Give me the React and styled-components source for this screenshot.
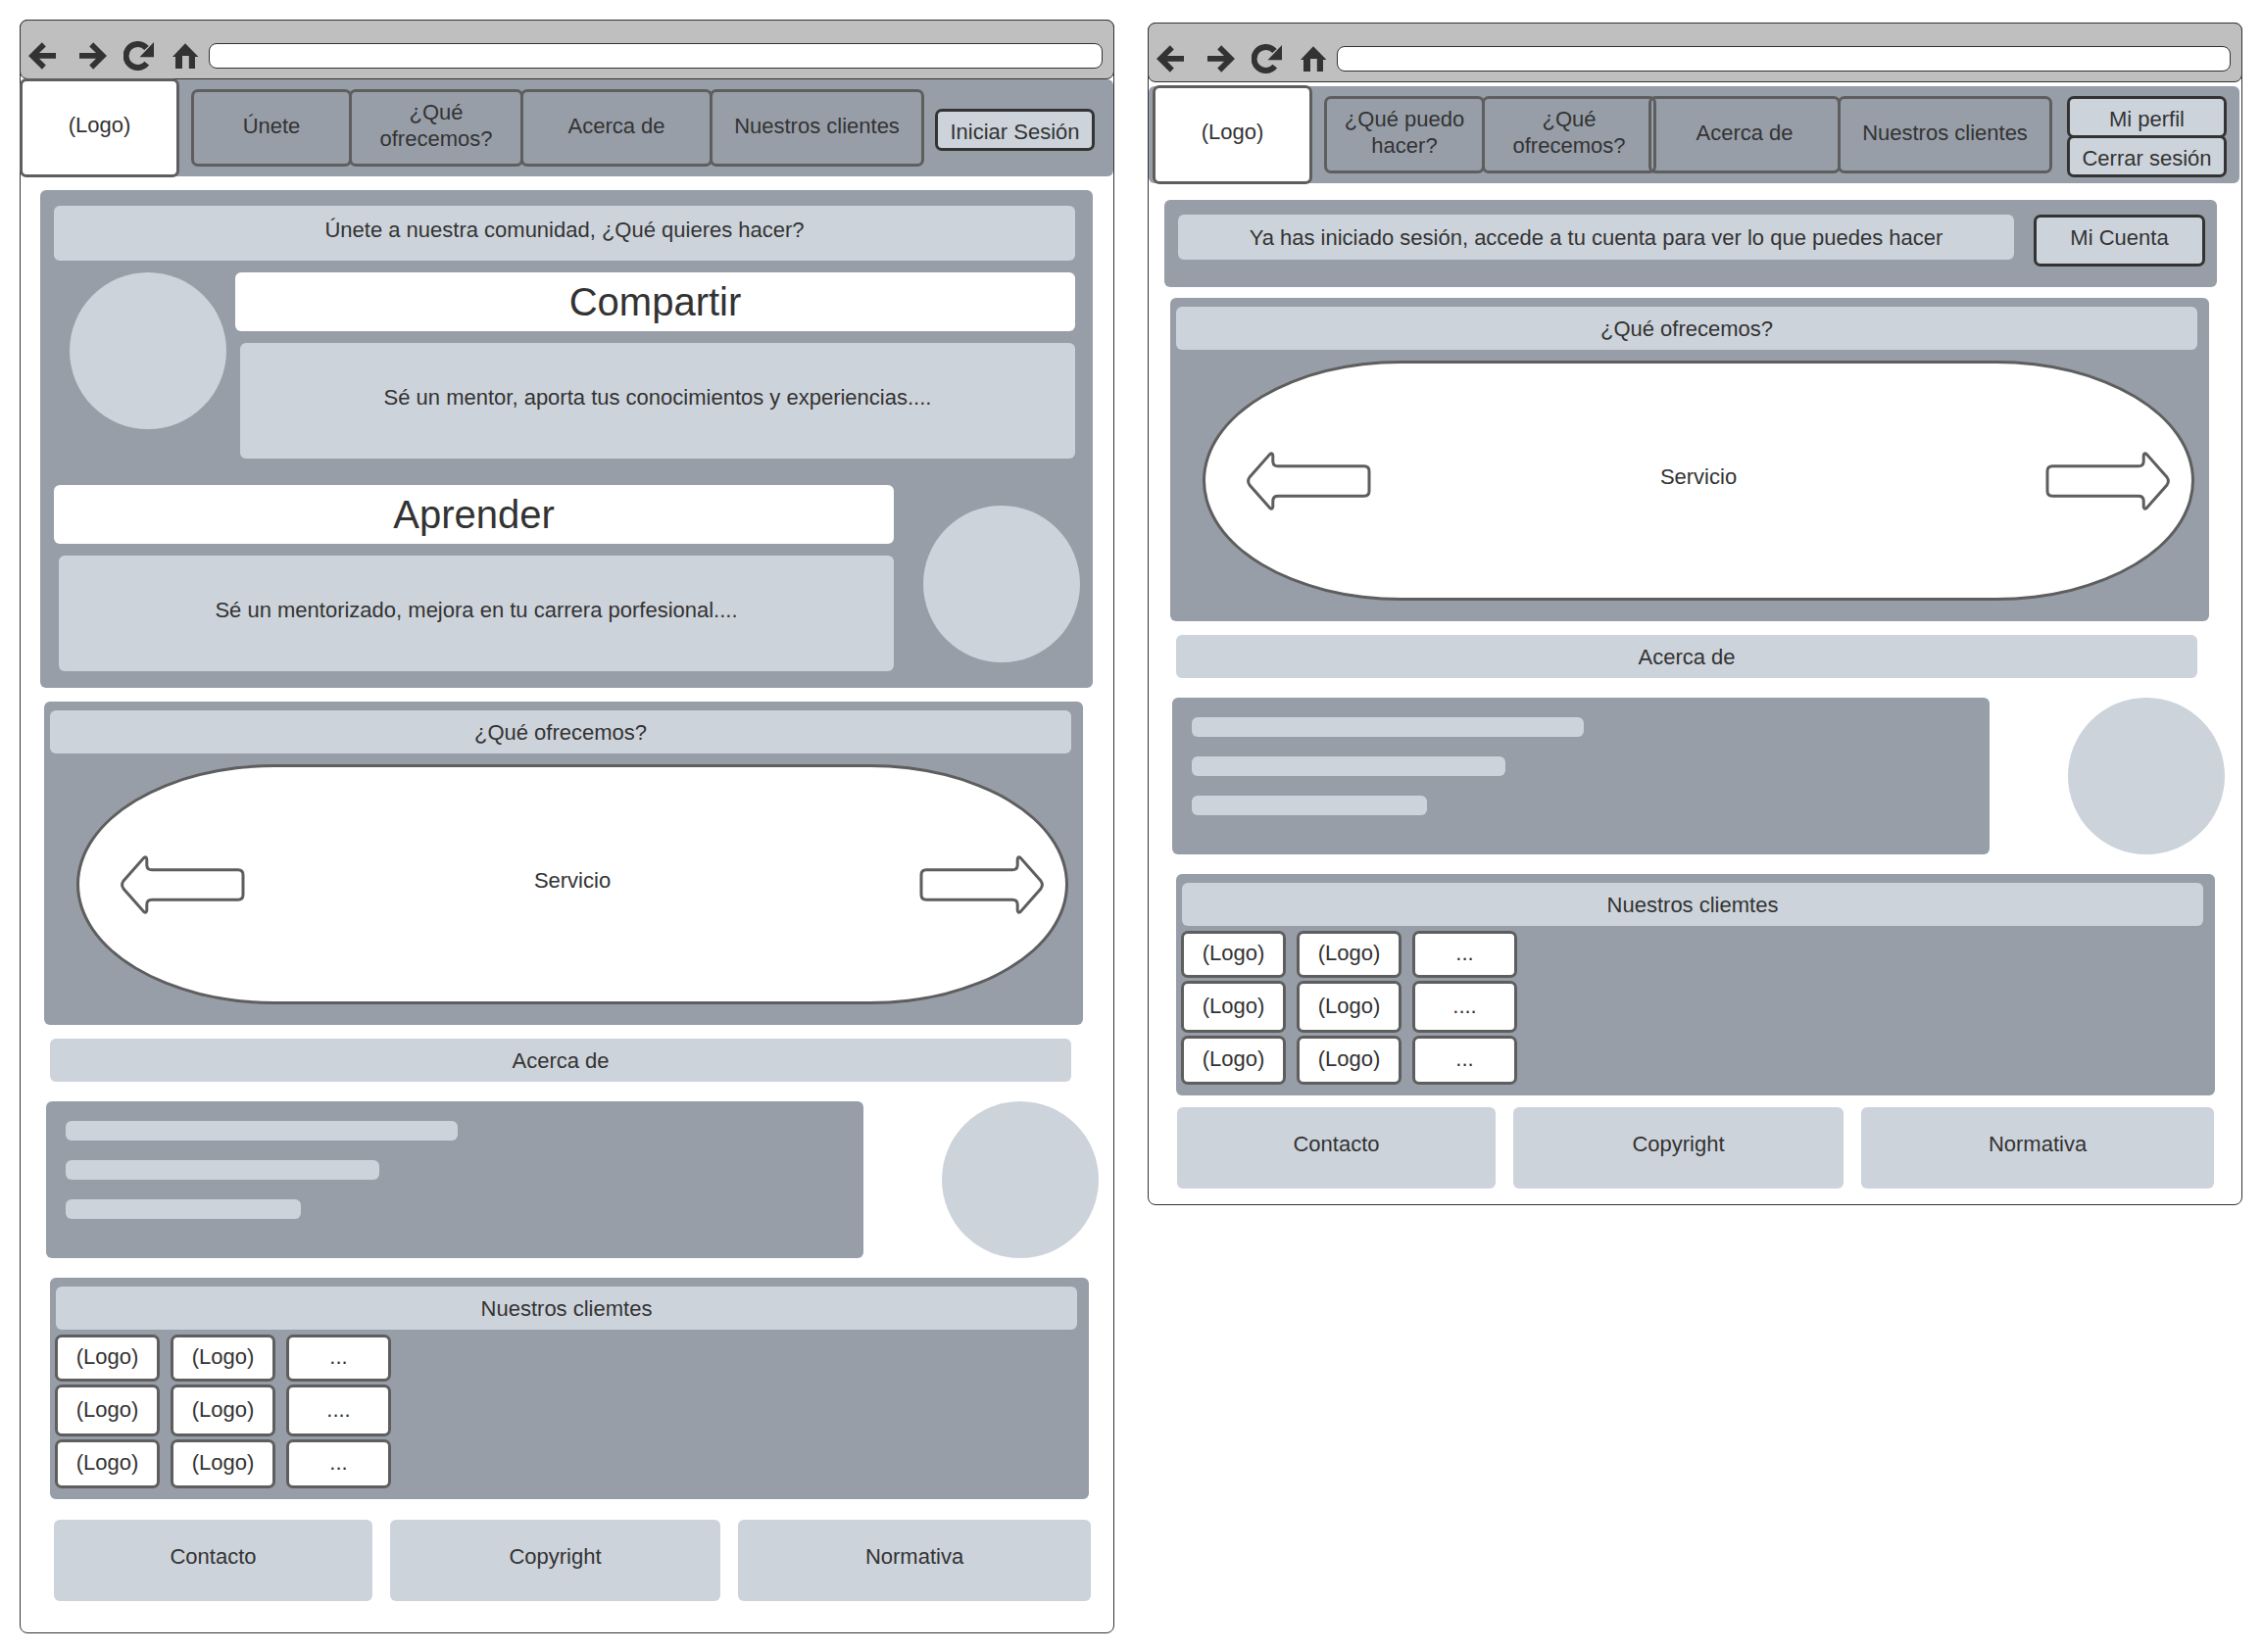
import React from "react";
import styled, { createGlobalStyle, css } from "styled-components";

const ink = "#333333";
const line = "#5e5e5e";
const slate = "#979ea8";
const mist = "#cdd3db";

const GlobalStyle = createGlobalStyle`
  *, *::before, *::after { box-sizing: border-box; }
  body {
    margin: 0;
    background: #ffffff;
    color: ${ink};
    font: 22px/27px "Liberation Sans", Arial, sans-serif;
  }
  h2, h3, p, ul { margin: 0; padding: 0; font: inherit; }
  ul { list-style: none; }
  a { color: inherit; text-decoration: none; }
  button { font: inherit; color: inherit; padding: 0; cursor: pointer; }
`;

const Page = styled.div`
  display: flex;
  align-items: flex-start;
  gap: 34px;
  padding: 20px 20px 18px;
`;

const Window = styled.section`
  flex: 1 1 0;
  min-width: 0;
  margin-top: ${(p) => p.$top || 0}px;
  border: 1px solid ${ink};
  border-radius: 8px;
`;

const Toolbar = styled.div`
  display: grid;
  grid-template-columns: 52px 45px 50px 37px 1fr;
  align-items: center;
  margin: -1px;
  padding: 21px 11px 8px 8px;
  background: #bfbfbf;
  border: 1px solid ${ink};
  border-radius: 8px;
`;

const ToolButton = styled.button`
  display: flex;
  align-items: center;
  justify-self: start;
  height: 30px;
  border: 0;
  background: none;
`;

const Address = styled.input`
  width: 100%;
  height: 26px;
  padding: 0 10px;
  border: 1px solid ${ink};
  border-radius: 8px;
  background: #ffffff;
  font: inherit;
  font-size: 16px;
`;

const outlined = css`
  display: flex;
  align-items: center;
  justify-content: center;
  text-align: center;
  border: 3px solid ${line};
  border-radius: 7px;
`;

const NavBar = styled.nav`
  display: flex;
  align-items: center;
  height: 99px;
  margin-top: ${(p) => p.$top}px;
  margin-right: ${(p) => p.$right}px;
  padding-right: ${(p) => p.$padRight}px;
  background: ${slate};
  border-radius: 6px;
`;

const Logo = styled.a`
  ${outlined}
  flex: 0 1 163px;
  height: 101px;
  margin: 0 12px 0 ${(p) => p.$left}px;
  padding-bottom: 7px;
  background: #ffffff;
`;

const NavLink = styled.a`
  ${outlined}
  flex: 0 1 ${(p) => p.$width}px;
  height: 79px;
  margin-left: ${(p) => (p.$overlap ? -p.$overlap : 0)}px;
  padding: 0 12px 5px;
`;

const Account = styled.div`
  display: flex;
  flex-direction: column;
  flex: 0 0 163px;
  margin-left: auto;
  padding-top: 4px;
`;

const ActionButton = styled.button`
  ${outlined}
  border-color: ${ink};
  background: ${mist};
  height: 43px;
  padding-top: 4px;
  & + & { margin-top: -3px; }
`;

const AccountButton = styled(ActionButton)`
  flex: 0 0 175px;
  height: 53px;
  padding: 0 0 6px;
`;

const Body = styled.div`
  padding: ${(p) => p.$padding};
`;

const Panel = styled.section`
  margin: ${(p) => p.$margin};
  padding: ${(p) => p.$padding};
  background: ${slate};
  border-radius: 6px;
`;

const Bar = styled.h2`
  display: flex;
  align-items: center;
  justify-content: center;
  min-height: ${(p) => p.$height || 44}px;
  margin: ${(p) => p.$margin || 0};
  padding-bottom: ${(p) => (p.$raised ? 7 : 0)}px;
  background: ${mist};
  border-radius: 6px;
`;

const ChoiceRow = styled.article`
  display: flex;
  align-items: flex-start;
  gap: ${(p) => p.$gap}px;
  margin-top: ${(p) => p.$top}px;
`;

const ChoiceText = styled.div`
  flex: 1;
  display: grid;
  gap: 12px;
`;

const ChoiceTitle = styled.h3`
  display: flex;
  align-items: center;
  justify-content: center;
  height: 60px;
  background: #ffffff;
  border-radius: 6px;
  font-size: 40px;
  line-height: 48px;
`;

const ChoiceNote = styled.p`
  display: flex;
  align-items: center;
  justify-content: center;
  height: 118px;
  margin-left: 5px;
  padding-bottom: 8px;
  background: ${mist};
  border-radius: 6px;
`;

const Circle = styled.div`
  flex: 0 0 160px;
  height: 160px;
  margin: ${(p) => p.$margin || 0};
  border-radius: 50%;
  background: ${mist};
`;

const Notice = styled.div`
  display: flex;
  align-items: flex-start;
  gap: 20px;
`;

const NoticeBar = styled(Bar)`
  flex: 1;
`;

const Carousel = styled.div`
  display: grid;
  grid-template-columns: 1fr auto 1fr;
  align-items: center;
  height: 245px;
  margin: 11px 3px 0 27px;
  padding: 0;
  border: 3px solid ${line};
  border-radius: 20% / 50%;
  background: #ffffff;
`;

const Slide = styled.p`
  padding-bottom: 8px;
`;

const ArrowButton = styled.button`
  display: flex;
  border: 0;
  background: none;
  justify-self: ${(p) => (p.$next ? "end" : "start")};
  margin: ${(p) => (p.$next ? "0 22px 0 0" : "0 0 0 42px")};
  svg { transform: ${(p) => (p.$next ? "scaleX(-1)" : "none")}; }
`;

const About = styled.div`
  display: flex;
  gap: 80px;
  margin: 20px 0 20px 8px;
`;

const AboutBox = styled.div`
  flex: 1;
  display: flex;
  flex-direction: column;
  gap: 20px;
  padding: 20px;
  background: ${slate};
  border-radius: 6px;
`;

const TextLine = styled.div`
  width: ${(p) => p.$width}px;
  max-width: 100%;
  height: 20px;
  border-radius: 6px;
  background: ${mist};
`;

const ClientGrid = styled.ul`
  display: grid;
  grid-template-columns: repeat(3, 107px);
  grid-template-rows: 48px 53px 50px;
  gap: 3px 11px;
  margin: 5px 0 0 -1px;
`;

const Client = styled.li`
  ${outlined}
  background: #ffffff;
  padding-bottom: 3px;
`;

const Footer = styled.footer`
  display: flex;
  gap: 18px;
  margin: ${(p) => p.$margin};
`;

const FooterLink = styled.a`
  flex: ${(p) => p.$grow} 1 0;
  display: flex;
  align-items: center;
  justify-content: center;
  height: 83px;
  padding-bottom: 8px;
  background: ${mist};
  border-radius: 6px;
`;

const BackIcon = ({ flip }) => (
  <svg width="28" height="28" viewBox="0 0 28 28" fill={ink} aria-hidden="true">
    <path
      transform={flip ? "translate(28 0) scale(-1 1)" : undefined}
      d="M0 14 13.8 .2 17.8 4.4 11 11H28V16.8H11L17.8 23.6 13.8 27.8Z"
    />
  </svg>
);

const ReloadIcon = () => (
  <svg width="32" height="30" viewBox="0 0 32 30" aria-hidden="true">
    <path d="M23.8 22.6A12 12 0 1 1 23.5 7" fill="none" stroke={ink} strokeWidth="6" />
    <path d="M31 1V16.2H16.5Z" fill={ink} />
  </svg>
);

const HomeIcon = () => (
  <svg width="27" height="26" viewBox="0 0 27 26" fill={ink} aria-hidden="true">
    <path d="M13 .3 26.5 14H23V26H16.8V13H10V26H3V14H0Z" />
  </svg>
);

const ArrowShape = () => (
  <svg width="127" height="60" viewBox="0 0 127 60" fill="#fff" stroke={line} strokeWidth="3" aria-hidden="true">
    <path d="M3 26 23.5 2.8Q26.6 .4 26.8 4V10Q27 14.8 32 14.8H120Q125 14.8 125 20V40Q125 45.3 120 45.3H32Q27 45.3 26.8 50V56Q26.6 59.6 23.5 57.2L3 34Q.2 30 3 26Z" />
  </svg>
);

function BrowserBar() {
  return (
    <Toolbar>
      <ToolButton aria-label="Atrás"><BackIcon /></ToolButton>
      <ToolButton aria-label="Adelante"><BackIcon flip /></ToolButton>
      <ToolButton aria-label="Recargar"><ReloadIcon /></ToolButton>
      <ToolButton aria-label="Inicio"><HomeIcon /></ToolButton>
      <Address type="text" aria-label="Dirección" />
    </Toolbar>
  );
}

function Offer({ margin }) {
  return (
    <Panel $margin={margin} $padding="9px 12px 21px 6px">
      <Bar>¿Qué ofrecemos?</Bar>
      <Carousel>
        <ArrowButton aria-label="Anterior"><ArrowShape /></ArrowButton>
        <Slide>Servicio</Slide>
        <ArrowButton $next aria-label="Siguiente"><ArrowShape /></ArrowButton>
      </Carousel>
    </Panel>
  );
}

const clients = [
  "(Logo)", "(Logo)", "...",
  "(Logo)", "(Logo)", "....",
  "(Logo)", "(Logo)", "...",
];

function CommonSections({ footerMargin }) {
  return (
    <>
      <Bar $margin="14px 28px 0 12px">Acerca de</Bar>
      <About>
        <AboutBox>
          <TextLine $width={400} />
          <TextLine $width={320} />
          <TextLine $width={240} />
        </AboutBox>
        <Circle />
      </About>
      <Panel $margin="0 10px 0 12px" $padding="9px 12px 11px 6px">
        <Bar>Nuestros cliemtes</Bar>
        <ClientGrid>
          {clients.map((name, i) => <Client key={i}>{name}</Client>)}
        </ClientGrid>
      </Panel>
      <Footer $margin={footerMargin}>
        <FooterLink href="#contacto" $grow={325}>Contacto</FooterLink>
        <FooterLink href="#copyright" $grow={337}>Copyright</FooterLink>
        <FooterLink href="#normativa" $grow={360}>Normativa</FooterLink>
      </Footer>
    </>
  );
}

export default function App() {
  return (
    <>
      <GlobalStyle />
      <Page>
        <Window>
          <BrowserBar />
          <NavBar $top={1} $right={0} $padRight={19}>
            <Logo href="#inicio" $left={-1}>(Logo)</Logo>
            <NavLink href="#unete" $width={164}>Únete</NavLink>
            <NavLink href="#ofrecemos" $width={178} $overlap={3}>¿Qué ofrecemos?</NavLink>
            <NavLink href="#acerca" $width={196} $overlap={3}>Acerca de</NavLink>
            <NavLink href="#clientes" $width={219} $overlap={3}>Nuestros clientes</NavLink>
            <Account>
              <ActionButton>Iniciar Sesión</ActionButton>
            </Account>
          </NavBar>
          <Body $padding="14px 15px 32px 18px">
            <Panel $margin="0 6px 0 2px" $padding="16px 18px 17px 14px">
              <Bar $height={56} $raised>Únete a nuestra comunidad, ¿Qué quieres hacer?</Bar>
              <ChoiceRow $gap={9} $top={12}>
                <Circle $margin="0 0 0 16px" />
                <ChoiceText>
                  <ChoiceTitle>Compartir</ChoiceTitle>
                  <ChoiceNote>Sé un mentor, aporta tus conocimientos y experiencias....</ChoiceNote>
                </ChoiceText>
              </ChoiceRow>
              <ChoiceRow $gap={30} $top={27}>
                <ChoiceText>
                  <ChoiceTitle>Aprender</ChoiceTitle>
                  <ChoiceNote>Sé un mentorizado, mejora en tu carrera porfesional....</ChoiceNote>
                </ChoiceText>
                <Circle $margin="21px -5px 0 0" />
              </ChoiceRow>
            </Panel>
            <Offer margin="14px 16px 0 6px" />
            <CommonSections footerMargin="21px 8px 0 16px" />
          </Body>
        </Window>

        <Window $top={3}>
          <BrowserBar />
          <NavBar $top={5} $right={2} $padRight={13}>
            <Logo href="#inicio" $left={4}>(Logo)</Logo>
            <NavLink href="#hacer" $width={164}>¿Qué puedo hacer?</NavLink>
            <NavLink href="#ofrecemos" $width={178} $overlap={3}>¿Qué ofrecemos?</NavLink>
            <NavLink href="#acerca" $width={196} $overlap={8}>Acerca de</NavLink>
            <NavLink href="#clientes" $width={219} $overlap={3}>Nuestros clientes</NavLink>
            <Account>
              <ActionButton>Mi perfil</ActionButton>
              <ActionButton>Cerrar sesión</ActionButton>
            </Account>
          </NavBar>
          <Body $padding="17px 17px 16px 16px">
            <Panel $margin="0 8px 0 0" $padding="15px 12px 21px 14px">
              <Notice>
                <NoticeBar $height={46}>
                  Ya has iniciado sesión, accede a tu cuenta para ver lo que puedes hacer
                </NoticeBar>
                <AccountButton>Mi Cuenta</AccountButton>
              </Notice>
            </Panel>
            <Offer margin="11px 16px 0 6px" />
            <CommonSections footerMargin="12px 11px 0 13px" />
          </Body>
        </Window>
      </Page>
    </>
  );
}
